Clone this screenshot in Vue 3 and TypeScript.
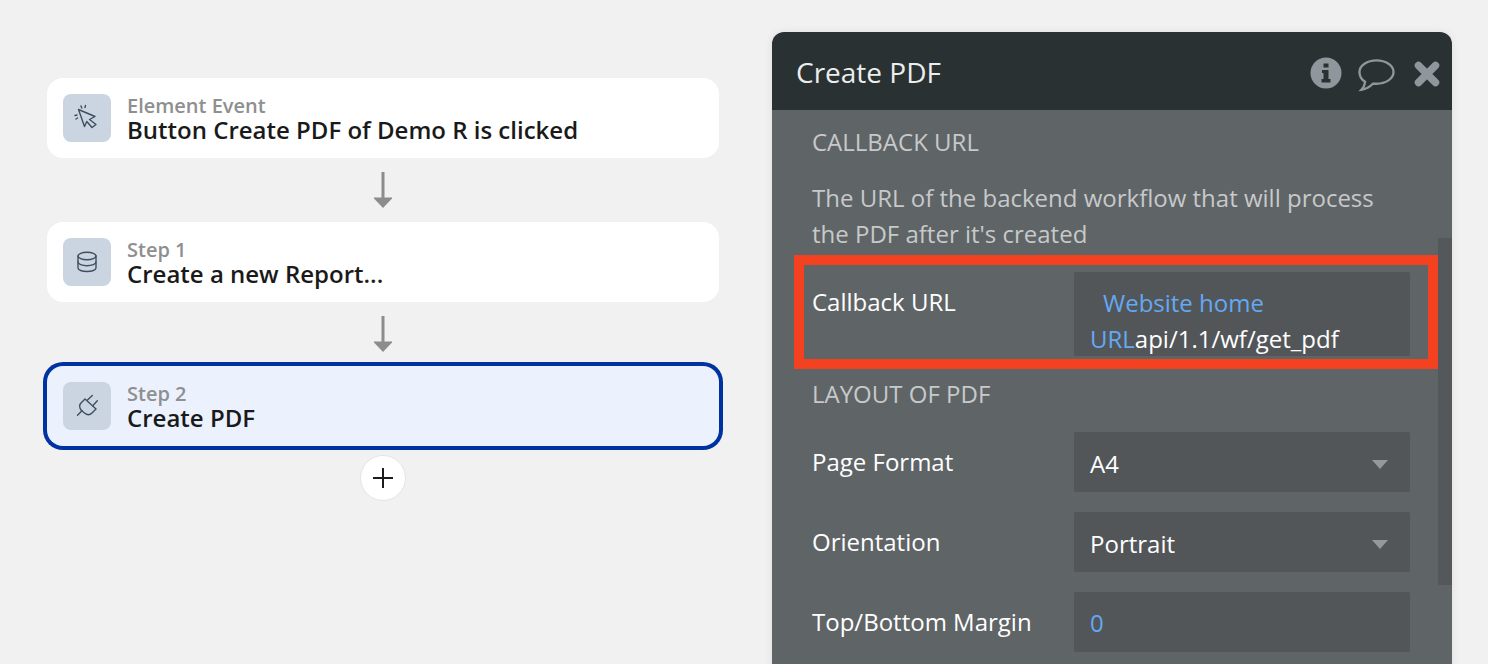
<script setup lang="ts">
interface Step {
  kicker: string;
  title: string;
  icon: 'click' | 'db' | 'plug';
  selected?: boolean;
}
const steps: Step[] = [
  { kicker: 'Element Event', title: 'Button Create PDF of Demo R is clicked', icon: 'click' },
  { kicker: 'Step 1', title: 'Create a new Report...', icon: 'db' },
  { kicker: 'Step 2', title: 'Create PDF', icon: 'plug', selected: true },
];
</script>

<template>
  <div class="page">
    <section class="flow">
      <template v-for="(s, i) in steps" :key="s.kicker">
        <div class="connector" v-if="i > 0">
          <svg width="24" height="36" viewBox="0 0 24 36">
            <path d="M12 0V27" stroke="#8c8c8c" stroke-width="3" fill="none" />
            <path d="M3 25.5H21V26.5L12 36L3 26.5Z" fill="#8c8c8c" />
          </svg>
        </div>
        <article class="card" :class="{ selected: s.selected }">
          <div class="icon">
            <svg width="48" height="48" viewBox="0 0 48 48" fill="none" stroke="#414e5e" stroke-width="1.4" stroke-linejoin="round" stroke-linecap="round">
              <template v-if="s.icon === 'click'">
                <path d="M15.5 15.5L32 22.5L26.5 25.5L33 30.5L29 33.5L23.8 27.5L21.5 32.5Z" />
                <path d="M12 21.5L14 21M18 12L18.8 14M22.5 11.5L22 13.5M13 25L14.5 24" />
              </template>
              <template v-else-if="s.icon === 'db'">
                <ellipse cx="24" cy="18" rx="9" ry="3.8" />
                <path d="M15 18V30C15 32 19 33.5 24 33.5S33 32 33 30V18" />
                <path d="M15 24C15 26 19 27.7 24 27.7S33 26 33 24" />
              </template>
              <template v-else>
                <path d="M22 17L33 27L29 31C27 33 24 33 21.5 31L18.5 28.5C16.5 26 16 23 18 21Z" />
                <path d="M14.5 33.3L19 28.8M24.5 18L29.3 13.5M30 23.5L34.3 18.8" />
              </template>
            </svg>
          </div>
          <div class="card-text">
            <div class="kicker">{{ s.kicker }}</div>
            <div class="title">{{ s.title }}</div>
          </div>
        </article>
      </template>
      <div class="add">
        <svg width="20" height="20" viewBox="0 0 20 20">
          <path d="M10 0V20M0 10H20" stroke="#1c1c1c" stroke-width="2" />
        </svg>
      </div>
    </section>

    <aside class="panel">
      <header class="panel-head">
        <h1>Create PDF</h1>
        <div class="head-icons">
          <svg width="32" height="32" viewBox="0 0 32 32">
            <circle cx="16" cy="16" r="15.5" fill="#8f979c" />
            <path d="M13.5 6.5H18.5V10.5H13.5ZM12 13H18.5V22H20.5V25.5H11.5V22H13.5V16H12Z" fill="#2a3133" />
          </svg>
          <svg class="bubble" width="37" height="34" viewBox="0 0 38 34">
            <path d="M19 2C28.5 2 36.5 7.2 36.5 14S28.5 26 19 26C17.8 26 16.6 25.9 15.5 25.8C12.5 29 9 31.5 3.5 32.2C5.5 30 7 28 7.3 24C3.5 21.8 1.5 18.2 1.5 14C1.5 7.2 9.5 2 19 2Z" fill="none" stroke="#8f979c" stroke-width="2.4" />
          </svg>
          <svg class="close" width="26" height="26" viewBox="0 0 26 26">
            <path d="M4.5 4.5L21.5 21.5M21.5 4.5L4.5 21.5" stroke="#8f979c" stroke-width="7.5" stroke-linecap="round" />
          </svg>
        </div>
      </header>
      <div class="panel-body">
        <div class="scrollbar"></div>
        <h2>CALLBACK URL</h2>
        <p class="desc">The URL of the backend workflow that will process the PDF after it's created</p>
        <div class="row url-row">
          <label>Callback URL</label>
          <div class="input tall">
            <span class="dyn first">Website home</span><br />
            <span class="dyn">URL</span>api/1.1/wf/get_pdf
          </div>
          <div class="annotation"></div>
        </div>
        <h2 class="second">LAYOUT OF PDF</h2>
        <div class="row">
          <label>Page Format</label>
          <div class="input select">A4<i class="caret"></i></div>
        </div>
        <div class="row">
          <label>Orientation</label>
          <div class="input select">Portrait<i class="caret"></i></div>
        </div>
        <div class="row">
          <label>Top/Bottom Margin</label>
          <div class="input select plain"><span class="dyn">0</span></div>
        </div>
      </div>
    </aside>
  </div>
</template>

<style>
html, body { margin: 0; background: #f1f1f1; }
</style>

<style scoped>
.page {
  width: 1488px;
  height: 664px;
  overflow: hidden;
  display: flex;
  align-items: flex-start;
  background: #f1f1f1;
  font-family: "Open Sans", sans-serif;
}
.flow {
  width: 672px;
  margin: 78px 0 0 47px;
  display: flex;
  flex-direction: column;
  align-items: center;
}
.card {
  width: 100%;
  height: 80px;
  box-sizing: border-box;
  background: #fff;
  border-radius: 16px;
  padding: 16px;
  display: flex;
  gap: 16px;
}
.card.selected {
  background: #ebf2fe;
  box-shadow: 0 0 0 4px #0033a1;
}
.icon {
  width: 48px;
  height: 48px;
  border-radius: 8px;
  background: #cbd5e2;
  flex: none;
}
.icon svg { display: block; }
.card-text { display: flex; flex-direction: column; padding-top: 1px; }
.kicker {
  font-size: 20px;
  line-height: 22px;
  font-weight: 600;
  color: #8f8f8f;
}
.title {
  font-size: 24px;
  line-height: 26px;
  font-weight: 600;
  color: #1a1a1a;
}
.connector {
  height: 64px;
  display: flex;
  align-items: flex-start;
  padding-top: 14px;
  box-sizing: border-box;
}
.connector svg { display: block; }
.add {
  width: 46px;
  height: 46px;
  box-sizing: border-box;
  margin-top: 9px;
  border-radius: 50%;
  background: #fff;
  border: 1.5px solid #e4e4e4;
  display: flex;
  align-items: center;
  justify-content: center;
}
.panel {
  width: 680px;
  margin: 32px 0 0 53px;
  border-radius: 12px 12px 0 0;
  overflow: hidden;
  flex: none;
  box-shadow: 0 0 8px rgba(0, 0, 0, 0.08);
}
.panel-head {
  height: 78px;
  box-sizing: border-box;
  padding: 1px 12px 0 24px;
  background: #2a3133;
  display: flex;
  align-items: center;
  justify-content: space-between;
}
.panel-head h1 {
  margin: 0;
  font-size: 28px;
  font-weight: 400;
  color: #eceded;
}
.head-icons { display: flex; align-items: center; margin-top: 3px; }
.bubble { margin: 4px 0 0 16px; }
.close { margin: 2px 0 0 19px; }
.panel-body {
  position: relative;
  background: #5f6467;
  height: 600px;
  box-sizing: border-box;
  padding: 14px 42px 0 40px;
  font-size: 24px;
  line-height: 36px;
  color: #fff;
}
.scrollbar {
  position: absolute;
  right: 0;
  top: 128px;
  width: 14px;
  height: 347px;
  background: #54585b;
}
h2 {
  margin: 0;
  font-size: 24px;
  line-height: 36px;
  font-weight: 400;
  color: #c7c9ca;
}
h2.second { margin: 20px 0 20px; }
.desc {
  margin: 20px 0 20px;
  color: #c7c9ca;
  width: 590px;
}
.row {
  position: relative;
  display: grid;
  grid-template-columns: 262px 336px;
  margin-bottom: 20px;
}
.row label { line-height: 60px; height: 60px; }
.url-row { margin-bottom: 0; }
.url-row label { line-height: 36px; margin-top: 12px; height: auto; }
.input {
  background: #535659;
  border-radius: 2px;
  box-sizing: border-box;
  padding: 0 16px;
}
.tall { height: 84px; padding-top: 13px; line-height: 36px; white-space: nowrap; }
.select {
  height: 60px;
  line-height: 64px;
  position: relative;
}
.select.plain { line-height: 62px; }
.dyn { color: #63a9f3; }
.dyn.first { margin-left: 13px; }
.caret {
  position: absolute;
  right: 22px;
  top: 28px;
  width: 0;
  height: 0;
  border-left: 8px solid transparent;
  border-right: 8px solid transparent;
  border-top: 9px solid #94989b;
}
.annotation {
  position: absolute;
  left: -18px;
  right: -28px;
  top: -17px;
  bottom: -13px;
  border: 10px solid #f4411f;
  pointer-events: none;
}
</style>
